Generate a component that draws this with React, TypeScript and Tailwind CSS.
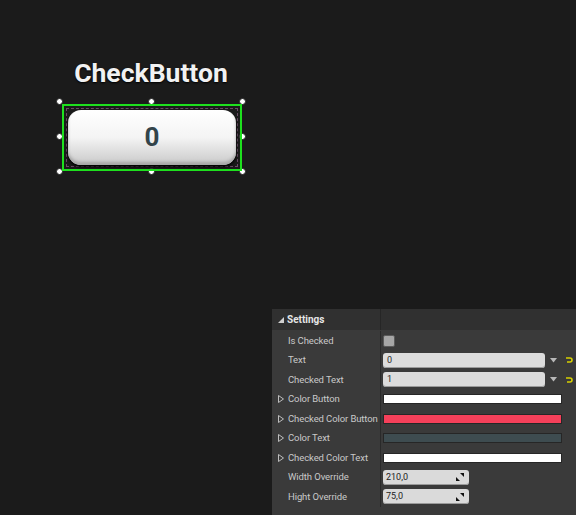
import React from 'react';

const font = { fontFamily: 'Roboto, "Noto Sans", sans-serif' };

const Handle = ({ className }: { className: string }) => (
  <span className={`absolute w-[7px] h-[7px] rounded-full bg-white border border-[#222] ${className}`} />
);

const Expand = () => (
  <svg width="6" height="8" viewBox="0 0 6 8" className="mr-[3px]">
    <path d="M0.5 0.5 L5.5 4 L0.5 7.5 Z" fill="none" stroke="#bdbdbd" strokeWidth="1" />
  </svg>
);

const Reset = () => (
  <svg width="8" height="8" viewBox="0 0 8 8">
    <path d="M1 2 H5 A2 2 0 0 1 5 6 H2" fill="none" stroke="#d6d000" strokeWidth="1.6" />
  </svg>
);

const Spin = () => (
  <svg width="8" height="8" viewBox="0 0 8 8">
    <path d="M4 0 H8 V4 Z" fill="#111" />
    <path d="M0 4 V8 H4 Z" fill="#111" />
  </svg>
);

const Row = ({ label, expand, children }: { label: string; expand?: boolean; children?: React.ReactNode }) => (
  <div className="flex h-[19.5px] items-center">
    <div className="w-[108px] h-full flex items-center pl-[6px] text-[9.5px] text-[#c9c9c9] whitespace-nowrap">
      {expand ? <Expand /> : <span className="w-[9px]" />}
      <span className="pl-[1px] tracking-[-0.1px]">{label}</span>
    </div>
    <div className="w-px h-full bg-[#2a2a2a]" />
    <div className="flex-1 h-full flex items-center pl-[2px]">{children}</div>
  </div>
);

const TextField = ({ value }: { value: string }) => (
  <div className="flex items-center">
    <div className="w-[162px] h-[15px] rounded-[3px] bg-[#dcdcdc] text-[9px] text-[#2a2a2a] flex items-center pl-[4px] shadow-[inset_0_-1px_0_#9a9a9a]">
      {value}
    </div>
    <svg width="7" height="5" viewBox="0 0 7 5" className="ml-[5px]">
      <path d="M0 0 H7 L3.5 4.5 Z" fill="#b8b8b8" />
    </svg>
    <span className="ml-[8px] flex"><Reset /></span>
  </div>
);

const ColorBar = ({ color }: { color: string }) => (
  <div className={`w-[179px] h-[10px] border border-[#262626] ${color}`} />
);

const NumField = ({ value }: { value: string }) => (
  <div className="w-[86px] h-[15px] rounded-[3px] bg-[#dadada] text-[9px] text-[#222] flex items-center justify-between pl-[3px] pr-[5px] shadow-[inset_0_-1px_0_#9a9a9a]">
    <span>{value}</span>
    <Spin />
  </div>
);

export default function App() {
  return (
    <div className="w-[576px] h-[515px] bg-[#1b1b1b] flex flex-col overflow-hidden" style={font}>
      <div className="pl-[59px] pt-[56px]">
        <div className="w-[184px] text-center text-[26.5px] font-bold text-[#f2f2f2] leading-[34px] [text-shadow:0_1px_2px_#000]">
          CheckButton
        </div>
        <div className="relative w-[184px] h-[71px] mt-[11px]">
          <Handle className="-left-[3px] -top-[3px]" />
          <Handle className="left-[89px] -top-[3px]" />
          <Handle className="-right-[3px] -top-[3px]" />
          <Handle className="-left-[3px] top-[32px]" />
          <Handle className="-right-[3px] top-[32px]" />
          <Handle className="-left-[3px] -bottom-[3px]" />
          <Handle className="left-[89px] -bottom-[3px]" />
          <Handle className="-right-[3px] -bottom-[3px]" />
          <div className="absolute left-[3px] top-[3px] w-[180px] h-[67px] border-2 border-[#1ee01e] p-[2px]">
            <div className="w-full h-full border border-dashed border-[#6b4b66] p-[1px]">
              <div className="w-full h-full rounded-[13px] bg-gradient-to-b from-[#ffffff] via-[#f4f4f4] to-[#c9c9c9] shadow-[0_2px_3px_#000,inset_0_-3px_3px_#a8a8a8] flex items-center justify-center text-[26px] font-bold text-[#33444a]">
                0
              </div>
            </div>
          </div>
        </div>
      </div>

      <div className="mt-auto ml-[272px] w-[304px] h-[206px] bg-[#3a3a3a] flex flex-col">
        <div className="flex h-[21px] bg-[#303030] items-center">
          <div className="w-[108px] h-full flex items-center pl-[6px] text-[10px] font-bold text-[#e6e6e6]">
            <svg width="6" height="6" viewBox="0 0 6 6" className="mr-[3px]">
              <path d="M6 0 V6 H0 Z" fill="#d0d0d0" />
            </svg>
            Settings
          </div>
          <div className="w-px h-full bg-[#262626]" />
        </div>
        <div className="pt-[1px]">
          <Row label="Is Checked">
            <div className="w-[12px] h-[12px] rounded-[2px] bg-[#a6a6a6] border border-[#5a5a5a]" />
          </Row>
          <Row label="Text"><TextField value="0" /></Row>
          <Row label="Checked Text"><TextField value="1" /></Row>
          <Row label="Color Button" expand><ColorBar color="bg-white" /></Row>
          <Row label="Checked Color Button" expand><ColorBar color="bg-[#f5405a]" /></Row>
          <Row label="Color Text" expand><ColorBar color="bg-[#3e4c50]" /></Row>
          <Row label="Checked Color Text" expand><ColorBar color="bg-white" /></Row>
          <Row label="Width Override"><NumField value="210,0" /></Row>
          <Row label="Hight Override"><NumField value="75,0" /></Row>
        </div>
      </div>
    </div>
  );
}
